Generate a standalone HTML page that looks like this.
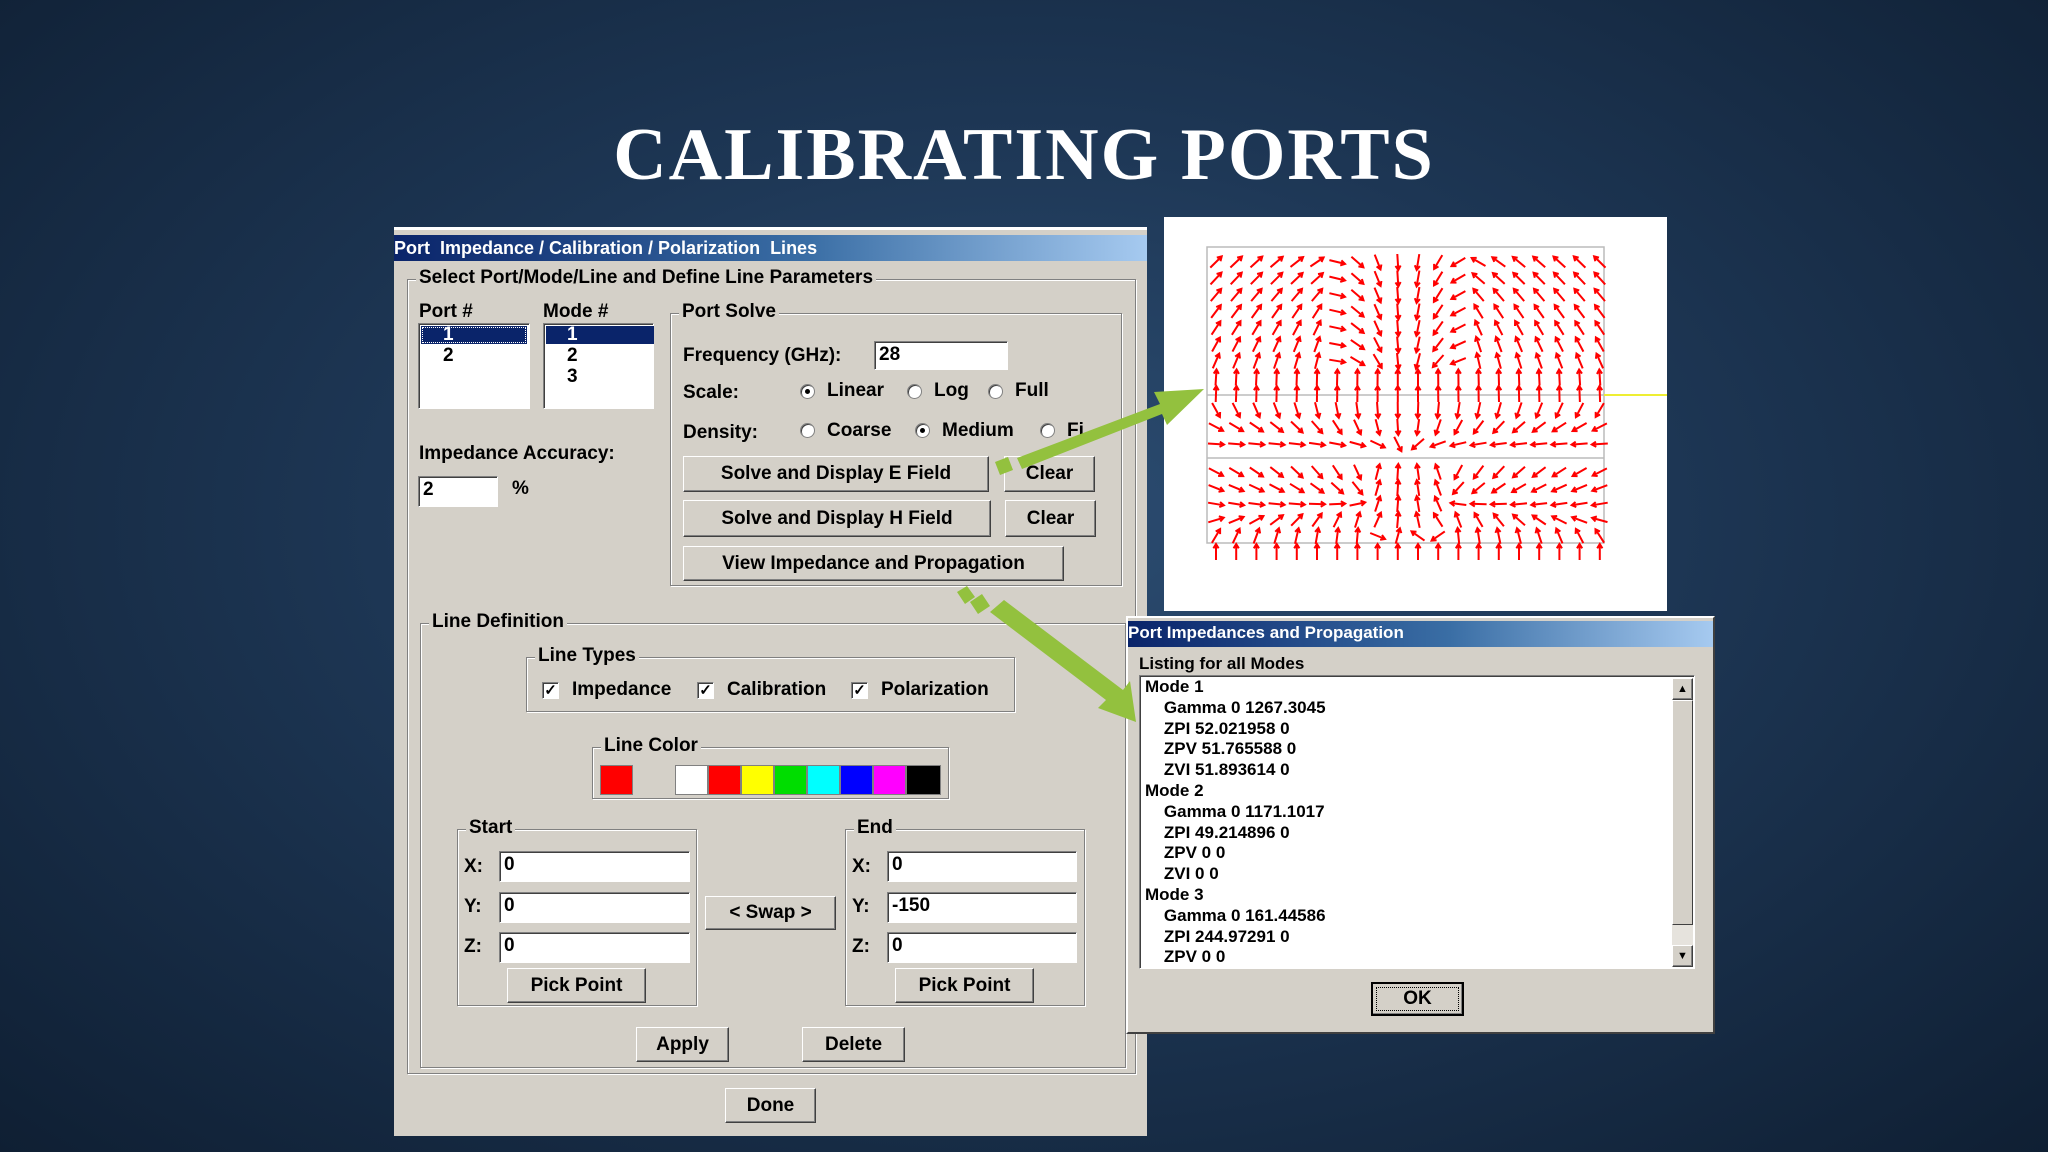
<!DOCTYPE html>
<html><head><meta charset="utf-8">
<style>
*{margin:0;padding:0;box-sizing:border-box}
body{width:2048px;height:1152px;overflow:hidden;position:relative;
background:radial-gradient(ellipse at 50% 45%,#2c4d72 0%,#1d3654 45%,#0f1f33 100%);
font-family:"Liberation Sans Narrow","Liberation Sans",sans-serif;font-weight:bold;color:#000}
.a{position:absolute}
.t{position:absolute;font-size:19px;line-height:22px;white-space:nowrap}
.grp{position:absolute;border:1px solid #808080;box-shadow:1px 1px 0 #fff, inset 1px 1px 0 #fff}
.lg{position:absolute;top:-13px;left:8px;background:#d4d0c8;padding:0 3px;font-size:19px;line-height:22px;white-space:nowrap}
.btn{position:absolute;background:#d4d0c8;border:1px solid;border-color:#fff #404040 #404040 #fff;box-shadow:inset -1px -1px 0 #808080;
display:flex;align-items:center;justify-content:center;font-size:19px;white-space:nowrap}
.inp{position:absolute;background:#fff;border:1px solid;border-color:#808080 #fff #fff #808080;box-shadow:inset 1px 1px 0 #404040;
font-size:19px;line-height:26px;padding-left:4px;white-space:nowrap}
.rad{position:absolute;width:15px;height:15px;border-radius:50%;background:#fff;border:1px solid #808080;box-shadow:inset 1px 1px 0 #404040}
.rad.on::after{content:"";position:absolute;left:4px;top:4px;width:5px;height:5px;border-radius:50%;background:#000}
.chk{position:absolute;width:17px;height:17px;background:#fff;border:1px solid;border-color:#808080 #fff #fff #808080;box-shadow:inset 1px 1px 0 #404040;font-size:15px;line-height:15px;text-align:center}
.sw{position:absolute;top:765px;width:33px;height:30px;border:1px solid #808080}
</style></head><body>

<div class="a" style="left:0;top:113px;width:2048px;text-align:center;font-family:'Liberation Serif',serif;font-weight:bold;font-size:74px;color:#fff;letter-spacing:2px;line-height:84px">CALIBRATING PORTS</div>

<!-- main dialog -->
<div class="a" style="left:394px;top:227px;width:753px;height:909px;background:#d4d0c8;border-top:3px solid #fff"></div>
<div class="a" style="left:394px;top:235px;width:753px;height:26px;background:linear-gradient(90deg,#0a246a,#3a6ea5 55%,#a6caf0)"></div>
<div class="t" style="left:394px;top:237px;color:#fff;font-size:18px">Port &nbsp;Impedance / Calibration / Polarization &nbsp;Lines</div>

<div class="grp" style="left:407px;top:279px;width:729px;height:795px"><div class="lg">Select Port/Mode/Line and Define Line Parameters</div></div>

<div class="t" style="left:419px;top:301px">Port #</div>
<div class="t" style="left:543px;top:301px">Mode #</div>
<div class="inp" style="left:418px;top:323px;width:112px;height:86px;padding:0"></div>
<div class="a" style="left:421px;top:326px;width:106px;height:18px;background:#0a246a;outline:1px dotted #fff;outline-offset:-2px"></div>
<div class="t" style="left:443px;top:324px;color:#fff">1</div>
<div class="t" style="left:443px;top:345px">2</div>
<div class="inp" style="left:543px;top:323px;width:111px;height:86px;padding:0"></div>
<div class="a" style="left:546px;top:326px;width:108px;height:18px;background:#0a246a"></div>
<div class="t" style="left:567px;top:324px;color:#fff">1</div>
<div class="t" style="left:567px;top:345px">2</div>
<div class="t" style="left:567px;top:366px">3</div>

<div class="t" style="left:419px;top:443px">Impedance Accuracy:</div>
<div class="inp" style="left:418px;top:476px;width:80px;height:31px">2</div>
<div class="t" style="left:512px;top:478px">%</div>

<div class="grp" style="left:670px;top:313px;width:452px;height:273px"><div class="lg">Port Solve</div></div>
<div class="t" style="left:683px;top:345px">Frequency (GHz):</div>
<div class="inp" style="left:874px;top:341px;width:134px;height:29px">28</div>
<div class="t" style="left:683px;top:382px">Scale:</div>
<div class="rad on" style="left:800px;top:384px"></div><div class="t" style="left:827px;top:380px">Linear</div>
<div class="rad" style="left:907px;top:384px"></div><div class="t" style="left:934px;top:380px">Log</div>
<div class="rad" style="left:988px;top:384px"></div><div class="t" style="left:1015px;top:380px">Full</div>
<div class="t" style="left:683px;top:422px">Density:</div>
<div class="rad" style="left:800px;top:423px"></div><div class="t" style="left:827px;top:420px">Coarse</div>
<div class="rad on" style="left:915px;top:423px"></div><div class="t" style="left:942px;top:420px">Medium</div>
<div class="rad" style="left:1040px;top:423px"></div><div class="t" style="left:1067px;top:420px">Fi</div>
<div class="btn" style="left:683px;top:456px;width:306px;height:36px">Solve and Display E Field</div>
<div class="btn" style="left:1004px;top:456px;width:91px;height:36px">Clear</div>
<div class="btn" style="left:683px;top:500px;width:308px;height:37px">Solve and Display H Field</div>
<div class="btn" style="left:1005px;top:500px;width:91px;height:37px">Clear</div>
<div class="btn" style="left:683px;top:546px;width:381px;height:35px">View Impedance and Propagation</div>

<div class="grp" style="left:420px;top:623px;width:706px;height:445px"><div class="lg">Line Definition</div></div>
<div class="grp" style="left:526px;top:657px;width:489px;height:55px"><div class="lg">Line Types</div></div>
<div class="chk" style="left:542px;top:682px">✓</div><div class="t" style="left:572px;top:679px">Impedance</div>
<div class="chk" style="left:697px;top:682px">✓</div><div class="t" style="left:727px;top:679px">Calibration</div>
<div class="chk" style="left:851px;top:682px">✓</div><div class="t" style="left:881px;top:679px">Polarization</div>

<div class="grp" style="left:592px;top:747px;width:357px;height:52px"><div class="lg">Line Color</div></div>
<div class="sw" style="left:600px;background:#f00"></div>
<div class="sw" style="left:675px;background:#fff"></div>
<div class="sw" style="left:708px;background:#f00"></div>
<div class="sw" style="left:741px;background:#ff0"></div>
<div class="sw" style="left:774px;background:#0d0"></div>
<div class="sw" style="left:807px;background:#0ff"></div>
<div class="sw" style="left:840px;background:#00f"></div>
<div class="sw" style="left:873px;background:#f0f"></div>
<div class="sw" style="left:906px;width:35px;background:#000"></div>

<div class="grp" style="left:457px;top:829px;width:240px;height:177px"><div class="lg">Start</div></div>
<div class="t" style="left:464px;top:856px">X:</div><div class="inp" style="left:499px;top:851px;width:191px;height:31px">0</div>
<div class="t" style="left:464px;top:896px">Y:</div><div class="inp" style="left:499px;top:892px;width:191px;height:31px">0</div>
<div class="t" style="left:464px;top:936px">Z:</div><div class="inp" style="left:499px;top:932px;width:191px;height:31px">0</div>
<div class="btn" style="left:507px;top:968px;width:139px;height:35px">Pick Point</div>

<div class="btn" style="left:705px;top:896px;width:131px;height:34px">&lt; Swap &gt;</div>

<div class="grp" style="left:845px;top:829px;width:240px;height:177px"><div class="lg">End</div></div>
<div class="t" style="left:852px;top:856px">X:</div><div class="inp" style="left:887px;top:851px;width:190px;height:31px">0</div>
<div class="t" style="left:852px;top:896px">Y:</div><div class="inp" style="left:887px;top:892px;width:190px;height:31px">-150</div>
<div class="t" style="left:852px;top:936px">Z:</div><div class="inp" style="left:887px;top:932px;width:190px;height:31px">0</div>
<div class="btn" style="left:895px;top:968px;width:139px;height:35px">Pick Point</div>

<div class="btn" style="left:636px;top:1027px;width:93px;height:35px">Apply</div>
<div class="btn" style="left:802px;top:1027px;width:103px;height:35px">Delete</div>
<div class="btn" style="left:725px;top:1088px;width:91px;height:35px">Done</div>

<!-- field plot -->
<div class="a" style="left:1164px;top:217px;width:503px;height:394px;background:#fff"></div>
<svg class="a" style="left:0;top:0" width="2048" height="1152" id="fld">
<rect x="1207" y="247" width="397" height="296" fill="none" stroke="#bbb" stroke-width="1.5"/>
<line x1="1207" y1="395" x2="1604" y2="395" stroke="#bbb" stroke-width="1.5"/>
<line x1="1604" y1="395" x2="1667" y2="395" stroke="#ee3" stroke-width="2"/>
<line x1="1207" y1="458" x2="1604" y2="458" stroke="#bbb" stroke-width="1.5"/>
<g id="arr" stroke="#f00" stroke-width="2" fill="none"></g>
</svg>

<!-- second dialog -->
<div class="a" style="left:1126px;top:616px;width:589px;height:418px;background:#d4d0c8;border:2px solid;border-color:#fff #404040 #404040 #fff"></div>
<div class="a" style="left:1128px;top:621px;width:585px;height:26px;background:linear-gradient(90deg,#0a246a,#3a6ea5 55%,#a6caf0)"></div>
<div class="t" style="left:1128px;top:622px;color:#fff;font-family:'Liberation Sans',sans-serif;font-size:17px">Port Impedances and Propagation</div>
<div class="t" style="left:1139px;top:653px;font-family:'Liberation Sans',sans-serif;font-size:17px">Listing for all Modes</div>
<div class="inp" style="left:1139px;top:675px;width:556px;height:294px;padding:0"></div>
<div class="a" style="left:1672px;top:678px;width:21px;height:289px;background:#e6e3dd"></div>
<div class="btn" style="left:1672px;top:678px;width:21px;height:22px;font-size:11px">▲</div>
<div class="btn" style="left:1672px;top:945px;width:21px;height:22px;font-size:11px">▼</div>
<div class="a" style="left:1672px;top:700px;width:21px;height:225px;background:#d4d0c8;border:1px solid;border-color:#fff #404040 #404040 #fff"></div>
<div class="a" style="left:1145px;top:677px;font-family:'Liberation Sans',sans-serif;font-size:17px;line-height:20.8px;white-space:pre">Mode 1
    Gamma 0 1267.3045
    ZPI 52.021958 0
    ZPV 51.765588 0
    ZVI 51.893614 0
Mode 2
    Gamma 0 1171.1017
    ZPI 49.214896 0
    ZPV 0 0
    ZVI 0 0
Mode 3
    Gamma 0 161.44586
    ZPI 244.97291 0
    ZPV 0 0</div>
<div class="btn" style="left:1371px;top:982px;width:93px;height:34px;border:2px solid #000;outline:1px dotted #000;outline-offset:-6px">OK</div>

<!-- green arrows -->
<svg class="a" style="left:0;top:0" width="2048" height="1152">
<g fill="#93c13e">
<polygon points="1017,458 1160,404 1154,392 1204,389 1167,425 1162,414 1022,469"/>
<polygon points="995,462 1008,457 1013,470 1000,475"/>
<polygon points="1004,600 1123,690 1130,681 1136,722 1098,708 1106,700 990,612"/>
<polygon points="957,592 967,586 975,597 965,604"/>
<polygon points="970,602 982,594 990,606 978,614"/>
</g>
</svg>

<script>
(function(){
var g=document.getElementById('arr'),s='';
function add(x,y,ang){var L=8,dx=Math.cos(ang)*L,dy=Math.sin(ang)*L;
var x1=x-dx,y1=y-dy,x2=x+dx,y2=y+dy,h=5;
var a1=ang+2.6,a2=ang-2.6;
s+='<path d="M'+x1.toFixed(1)+' '+y1.toFixed(1)+'L'+x2.toFixed(1)+' '+y2.toFixed(1)+'M'+(x2+Math.cos(a1)*h).toFixed(1)+' '+(y2+Math.sin(a1)*h).toFixed(1)+'L'+x2.toFixed(1)+' '+y2.toFixed(1)+'L'+(x2+Math.cos(a2)*h).toFixed(1)+' '+(y2+Math.sin(a2)*h).toFixed(1)+'"/>';}
var cx=1404;
for(var r=0;r<18;r++){
 var y;
 if(r<9)y=262+r*16.5; else if(r<12)y=410+(r-9)*17; else y=472+(r-12)*16;
 for(var c=0;c<20;c++){
  var x=1216+c*20.2;
  var u=(x-cx)/200, vx, vy;
  if(r<9){var t=r/8; vx=-u*(1.2-t); vy=(0.4-Math.abs(u))*1.5*(1-t)-(Math.abs(u)>0.35?0.6:0)*(0.5+t); if(t>0.85){vx*=0.2;vy=-1;}}
  else if(r<12){vx=-u*(0.6+(r-9)*0.5); vy=1-(r-9)*0.45;}
  else {var t2=(r-12)/5; vx=-u*(1-t2)*1.2; vy=(0.5-t2)*1.2*(Math.abs(u)>0.2?1:-1)-(1-Math.abs(u))*0.5*t2; if(t2>0.9){vx*=0.2;vy=-1;}}
  add(x,y,Math.atan2(vy,vx));
 }
}
g.innerHTML=s;
})();
</script>
</body></html>
